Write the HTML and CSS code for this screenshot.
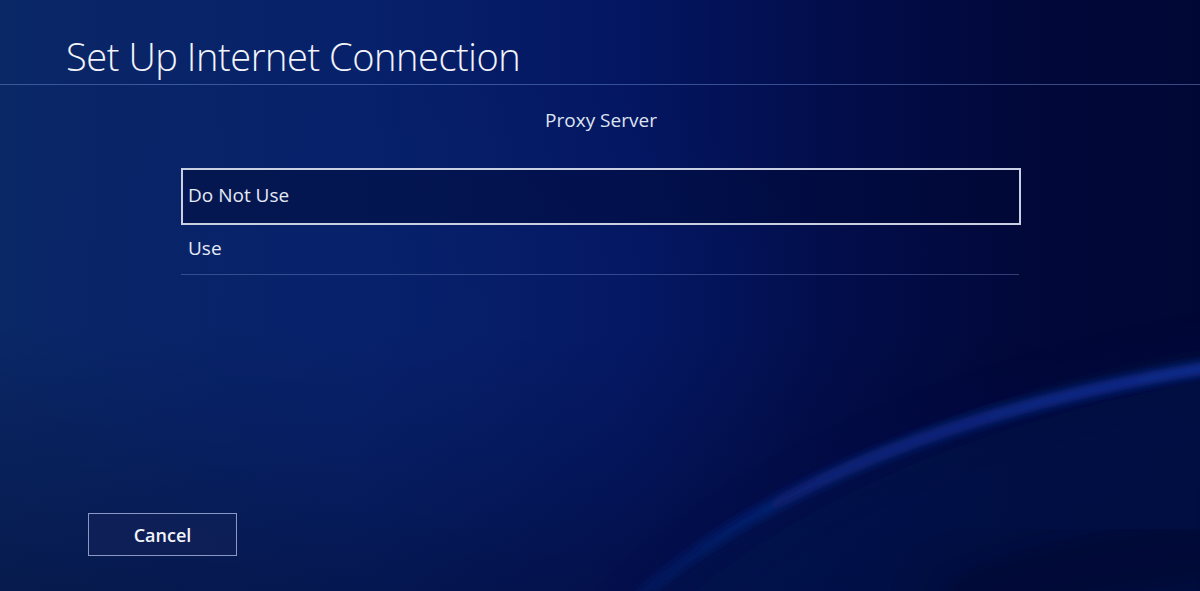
FILE: index.html
```html
<!DOCTYPE html>
<html>

<head>
     <title>Set Up Internet Connection</title>
     <link rel="stylesheet" href="styles.css">
</head>

<body>
     <div class="screen">
          <svg class="wave" width="1200" height="591" viewBox="0 0 1200 591">
               <defs>
                    <linearGradient id="bandFade" x1="620" y1="0" x2="1200" y2="0" gradientUnits="userSpaceOnUse">
                         <stop offset="0" stop-color="#0a2a86" stop-opacity="0.2" />
                         <stop offset="0.35" stop-color="#0b2b8c" stop-opacity="0.75" />
                         <stop offset="1" stop-color="#0d2f96" stop-opacity="0.95" />
                    </linearGradient>
                    <filter id="soft" x="-10%" y="-20%" width="120%" height="140%">
                         <feGaussianBlur stdDeviation="4" />
                    </filter>
                    <filter id="wide" x="-30%" y="-30%" width="160%" height="160%">
                         <feGaussianBlur stdDeviation="24" />
                    </filter>
               </defs>
               <path d="M 620 640 Q 820 430 1240 358 L 1240 640 Z" fill="#041552" opacity="0.5" filter="url(#wide)" />
               <path d="M 630 605 Q 830 425 1230 364" fill="none" stroke="url(#bandFade)" stroke-width="13" filter="url(#soft)" />
               <path d="M 940 610 Q 1060 560 1230 548" fill="none" stroke="#00041f" stroke-width="36" opacity="0.55" filter="url(#wide)" />
          </svg>

          <header class="header">
               <h1 class="title">Set Up Internet Connection</h1>
          </header>

          <main class="content">
               <div class="subtitle">Proxy Server</div>
               <ul class="options">
                    <li class="option selected">Do Not Use</li>
                    <li class="option">Use</li>
               </ul>
          </main>

          <footer class="footer">
               <button class="cancel">Cancel</button>
          </footer>
     </div>
</body>

</html>
```

FILE: styles.css
```css
html,
body {
     margin: 0;
     padding: 0;
}

body {
     font-family: "Open Sans", "Noto Sans", sans-serif;
     color: #e8ecf6;
     background-color: #041a5c;
}

.screen {
     position: relative;
     width: 1200px;
     height: 591px;
     overflow: hidden;
     display: flex;
     flex-direction: column;
     background:
          radial-gradient(ellipse 600px 380px at 420px 320px, rgba(8, 34, 110, 0.35), rgba(8, 34, 110, 0) 70%),
          linear-gradient(180deg, rgba(0, 0, 0, 0) 55%, rgba(0, 4, 32, 0.35) 100%),
          linear-gradient(90deg, #0a2766 0%, #07216a 30%, #041662 52%, #020d4a 70%, #01083a 85%, #010735 100%);
}

.wave {
     position: absolute;
     left: 0;
     top: 0;
     pointer-events: none;
}

.header {
     position: relative;
     height: 85px;
     border-bottom: 1px solid rgba(96, 132, 200, 0.55);
     box-sizing: border-box;
     padding-left: 66px;
}

.title {
     margin: 0;
     padding-top: 30px;
     font-size: 38px;
     font-weight: 300;
     line-height: 52px;
     letter-spacing: -0.45px;
     color: #f2f4fa;
}

.content {
     position: relative;
     width: 840px;
     margin-left: 181px;
     flex: 1;
}

.subtitle {
     margin-top: 22px;
     text-align: center;
     font-size: 19px;
     font-weight: 400;
     line-height: 26px;
     color: #dfe4f1;
}

.options {
     list-style: none;
     margin: 35px 0 0 0;
     padding: 0;
}

.option {
     height: 50px;
     line-height: 46px;
     padding-left: 7px;
     font-size: 19px;
     color: #e6eaf5;
     box-sizing: border-box;
}

.option + .option {
     border-bottom: 1px solid rgba(110, 130, 190, 0.45);
     width: 838px;
}

.option.selected {
     height: 57px;
     line-height: 51px;
     border: 2px solid #c9d0e2;
     background-color: rgba(0, 8, 50, 0.45);
     padding-left: 5px;
}

.footer {
     position: relative;
     height: 78px;
     padding-left: 88px;
}

.cancel {
     width: 149px;
     height: 43px;
     box-sizing: border-box;
     border: 1px solid #8b98c6;
     background-color: rgba(20, 34, 90, 0.55);
     color: #f2f4fa;
     font-family: "Open Sans", "Noto Sans", sans-serif;
     font-size: 18px;
     font-weight: 600;
     padding: 0;
     cursor: pointer;
}
```
